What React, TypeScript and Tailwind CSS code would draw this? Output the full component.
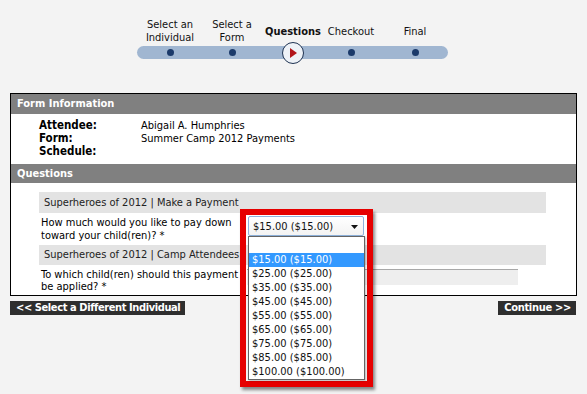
import React from "react";

const FONT = { fontFamily: "Tahoma, 'DejaVu Sans Condensed', 'DejaVu Sans', sans-serif" };

const options = [
  "$15.00 ($15.00)",
  "$25.00 ($25.00)",
  "$35.00 ($35.00)",
  "$45.00 ($45.00)",
  "$55.00 ($55.00)",
  "$65.00 ($65.00)",
  "$75.00 ($75.00)",
  "$85.00 ($85.00)",
  "$100.00 ($100.00)",
];

function Dot() {
  return <div className="w-[7px] h-[7px] rounded-full bg-[#1b3a6a]" />;
}

export default function App() {
  return (
    <div
      className="w-[587px] h-[394px] bg-[#f3f3f3] overflow-hidden text-[11px] text-black"
      style={FONT}
    >
      {/* Progress */}
      <div className="pt-[18px] pl-[137px]">
        <div className="grid grid-cols-[66px_58px_64px_52px_71px] items-center leading-[13px] text-center text-[#111]">
          <div>Select an<br />Individual</div>
          <div>Select a<br />Form</div>
          <div className="font-bold">Questions</div>
          <div>Checkout</div>
          <div className="pl-[5px]">Final</div>
        </div>
        <div className="mt-[2px] w-[311px] h-[13px] rounded-full bg-[#a0b6d1] grid grid-cols-[66px_58px_64px_52px_71px] grid-rows-[13px] items-center justify-items-center">
          <Dot />
          <Dot />
          <div className="w-[22px] h-[22px] rounded-full bg-[#eef2f7] border-[1.5px] border-[#1f3352] flex items-center justify-center">
            <svg width="10" height="12" viewBox="0 0 10 12">
              <polygon points="2,1 9,6 2,11" fill="#b2161b" />
            </svg>
          </div>
          <Dot />
          <div className="pl-[5px]"><Dot /></div>
        </div>
      </div>

      {/* Panel */}
      <div className="mt-[34px] ml-[10px] w-[567px] border border-black bg-white">
        <div className="h-[20px] leading-[20px] bg-[#808080] text-white font-bold pl-[6px]">
          Form Information
        </div>
        <div className="pt-[5px] pb-[6px] pl-[28px] leading-[13px]">
          <div className="flex"><div className="w-[102px] font-bold text-[11.5px]">Attendee:</div><div>Abigail A. Humphries</div></div>
          <div className="flex"><div className="w-[102px] font-bold text-[11.5px]">Form:</div><div>Summer Camp 2012 Payments</div></div>
          <div className="flex"><div className="w-[102px] font-bold text-[11.5px]">Schedule:</div><div></div></div>
        </div>
        <div className="h-[19px] leading-[19px] bg-[#808080] text-white font-bold pl-[6px]">
          Questions
        </div>
        <div className="pt-[9px] pb-[2px]">
          <div className="ml-[28px] w-[507px] h-[21px] leading-[21px] bg-[#e3e3e3] pl-[5px] text-[#222]">
            Superheroes of 2012 | Make a Payment
          </div>
          <div className="flex h-[32px] pt-[3px] pl-[30px] leading-[13px]">
            <div className="w-[207px]">How much would you like to pay down<br />toward your child(ren)? *</div>
            <div className="relative w-[116px] h-[20px] z-10">
              {/* red annotation frame */}
              <div className="absolute left-[-8px] top-[-7px] w-[133px] h-[178px] border-[6px] border-[#e60000] shadow-[2px_3px_3px_rgba(0,0,0,0.45)]" />
              <div className="relative h-[20px] border border-[#8fb2dc] rounded-[2px] bg-gradient-to-b from-white to-[#f3f3f3] flex items-center pl-[4px] text-[#111]">
                <span>$15.00 ($15.00)</span>
                <svg className="absolute right-[5px] top-[8px]" width="7" height="4" viewBox="0 0 7 4">
                  <polygon points="0,0 7,0 3.5,4" fill="#111" />
                </svg>
              </div>
              <div className="absolute left-0 top-[20px] w-[117px] border border-[#646464] bg-white shadow-[1px_1px_2px_rgba(0,0,0,0.25)]">
                <div className="h-[16px]" />
                {options.map((o, i) => (
                  <div
                    key={o}
                    className={
                      i === 0
                        ? "h-[14px] leading-[14px] pl-[3px] bg-[#3399ff] text-white"
                        : "h-[14px] leading-[14px] pl-[3px] text-[#111]"
                    }
                  >
                    {o}
                  </div>
                ))}
              </div>
            </div>
          </div>
          <div className="ml-[28px] w-[507px] h-[20px] leading-[20px] bg-[#e3e3e3] pl-[5px] text-[#222]">
            Superheroes of 2012 | Camp Attendees
          </div>
          <div className="flex pt-[4px] pl-[30px] leading-[12px]">
            <div className="w-[206px]">To which child(ren) should this payment<br />be applied? *</div>
            <div className="w-[271px] h-[16px] border-t border-[#a8a8a8] bg-[#eeeeee]" />
          </div>
        </div>
      </div>

      {/* Buttons */}
      <div className="mt-[5px] ml-[10px] w-[566px] flex justify-between">
        <div className="h-[14px] leading-[14px] bg-[#2e2e2e] text-white font-bold pl-[6px] pr-[5px] tracking-[-0.4px]">
          &lt;&lt; Select a Different Individual
        </div>
        <div className="h-[14px] leading-[14px] bg-[#2e2e2e] text-white font-bold pl-[6px] pr-[5px] tracking-[-0.3px]">
          Continue &gt;&gt;
        </div>
      </div>
    </div>
  );
}
